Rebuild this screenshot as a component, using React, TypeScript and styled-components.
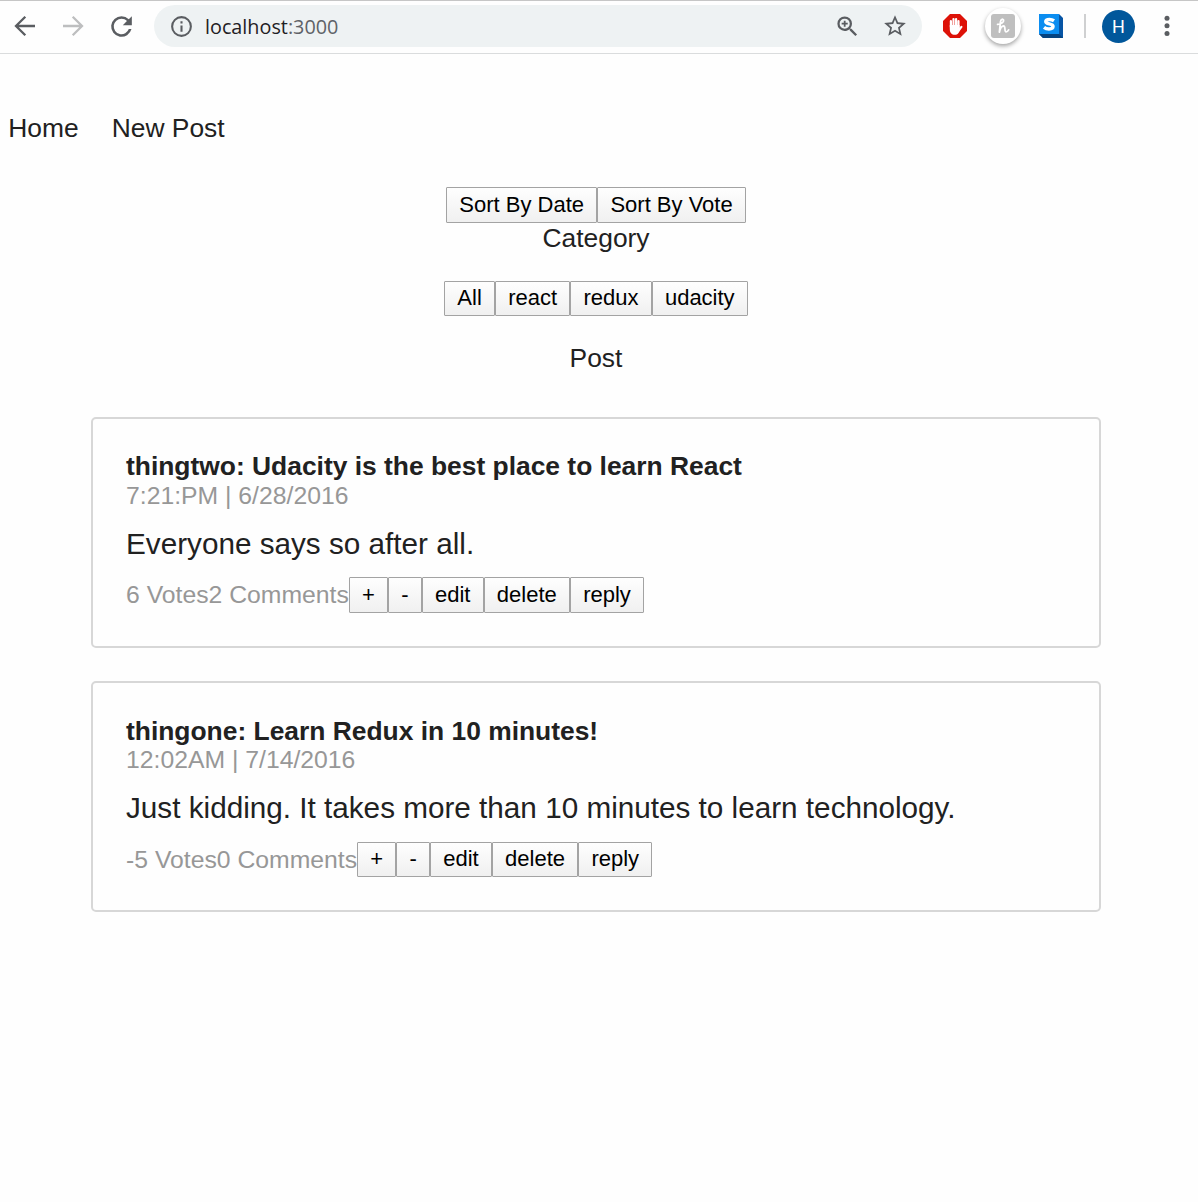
import React from "react";
import styled, { createGlobalStyle } from "styled-components";

const GlobalStyle = createGlobalStyle`
  * { box-sizing: border-box; }
  body {
    margin: 0;
    background: #fefefe;
    color: #212121;
    font-family: "Liberation Sans", Arial, sans-serif;
  }
`;

const Window = styled.div`
  width: 1198px;
  height: 1202px;
  overflow: hidden;
  background: #fefefe;
`;

const Toolbar = styled.header`
  display: flex;
  align-items: center;
  height: 54px;
  padding: 0 16px 2px 10px;
  border-top: 1px solid #c6c6c6;
  border-bottom: 1px solid #dadcdd;
  color: #5a5d61;

  svg { display: block; flex: none; }
`;

const NavIcons = styled.div`
  display: flex;
  align-items: center;
  gap: 18px;
  width: 144px;
  flex: none;
`;

const AddressBar = styled.div`
  display: flex;
  align-items: center;
  width: 768px;
  height: 42px;
  padding: 0 14px 0 15px;
  border-radius: 21px;
  background: #eef2f3;
  flex: none;
`;

const Url = styled.span`
  flex: 1;
  margin-left: 11px;
  padding-top: 2px;
  font: 19.8px/28px "Open Sans", "Noto Sans", sans-serif;
  color: #1f2023;
`;

const Port = styled.span`
  color: #5f6368;
`;

const AddressActions = styled.div`
  display: flex;
  align-items: center;
  gap: 21.5px;
`;

const Extensions = styled.div`
  display: flex;
  align-items: center;
  flex: 1;
  margin-left: 21px;
`;

const HoneyDisc = styled.div`
  display: flex;
  align-items: center;
  justify-content: center;
  width: 36px;
  height: 36px;
  margin: 0 18px;
  border-radius: 50%;
  background: #fff;
  box-shadow: 0 2px 4px rgba(0, 0, 0, 0.36);
`;

const Divider = styled.div`
  width: 2px;
  height: 24px;
  margin: 0 16px 0 21px;
  background: #cfd0d1;
`;

const Avatar = styled.div`
  width: 33px;
  height: 33px;
  margin-right: 28.5px;
  border-radius: 50%;
  background: #01579b;
  color: #fff;
  font: 18px/33px Roboto, sans-serif;
  text-align: center;
`;

const Page = styled.main`
  width: 1192px;
`;

const Nav = styled.nav`
  display: flex;
  gap: 33px;
  padding: 59px 8.25px 0;
  height: 133.45px;
  font-size: 26.4px;
  line-height: 30px;
`;

const ButtonRow = styled.div`
  display: flex;
  justify-content: center;
`;

const Button = styled.button`
  height: 35.4px;
  padding: 0 12.2px 0.6px;
  border: 1px solid #a3a3a3;
  border-radius: 1px;
  background: linear-gradient(#fefefe, #f0f0f0);
  color: #000;
  font: 22px/30px "Liberation Sans", Arial, sans-serif;
`;

const Heading = styled.div<{ $before: number; $after: number }>`
  margin: ${(p) => p.$before}px 0 ${(p) => p.$after}px;
  font-size: 26.4px;
  line-height: 30px;
  text-align: center;
`;

const Card = styled.article`
  width: 1010px;
  height: 230.9px;
  margin: 0 auto 33.4px;
  padding: 32.3px 33px 32px;
  border: 2px solid #d7d7d7;
  border-radius: 5px;
`;

const Title = styled.div`
  font-size: 26.4px;
  font-weight: 700;
  line-height: 30px;
`;

const Stamp = styled.div`
  margin-top: 0.8px;
  color: #979797;
  font-size: 24.75px;
  line-height: 28px;
`;

const Body = styled.div`
  margin: 16.6px 0 16.5px;
  font-size: 29.7px;
  line-height: 34px;
`;

const Actions = styled.div`
  display: flex;
`;

const Counts = styled.span`
  color: #979797;
  font-size: 24.75px;
  line-height: 35px;
`;

const BackIcon = () => (
  <svg width="30" height="30" viewBox="0 0 30 30" fill="none" stroke="currentColor" strokeWidth="2.3">
    <path d="M25 15H6.5M15.3 5.7 6 15l9.3 9.3" />
  </svg>
);

const ForwardIcon = () => (
  <svg width="30" height="30" viewBox="0 0 30 30" fill="none" stroke="#bdbebf" strokeWidth="2.3">
    <path d="M5 15h18.5M14.7 5.7 24 15l-9.3 9.3" />
  </svg>
);

const ReloadIcon = () => (
  <svg width="31" height="31" viewBox="0 0 24 24" fill="currentColor">
    <path d="M17.65 6.35A7.96 7.96 0 0 0 12 4a8 8 0 1 0 7.73 10h-2.08A6 6 0 1 1 12 6c1.66 0 3.14.69 4.22 1.78L13 11h7V4z" />
  </svg>
);

const InfoIcon = () => (
  <svg width="25" height="25" viewBox="0 0 24 24" fill="currentColor">
    <path d="M11 7h2v2h-2zm0 4h2v6h-2zm1-9a10 10 0 1 0 0 20 10 10 0 0 0 0-20zm0 18a8 8 0 1 1 0-16 8 8 0 0 1 0 16z" />
  </svg>
);

const ZoomIcon = () => (
  <svg width="27" height="27" viewBox="0 0 24 24" fill="currentColor">
    <path d="M15.5 14h-.79l-.28-.27A6.47 6.47 0 0 0 16 9.5 6.5 6.5 0 1 0 9.5 16c1.61 0 3.09-.59 4.23-1.57l.27.28v.79l5 4.99L20.49 19zm-6 0a4.5 4.5 0 1 1 0-9 4.5 4.5 0 0 1 0 9zM10.3 6.8H8.7v1.9H6.8v1.6h1.9v1.9h1.6v-1.9h1.9V8.7h-1.9z" />
  </svg>
);

const StarIcon = () => (
  <svg width="26" height="26" viewBox="0 0 24 24" fill="currentColor">
    <path d="m22 9.24-7.19-.62L12 2 9.19 8.63 2 9.24l5.46 4.73L5.82 21 12 17.27 18.18 21l-1.63-7.03zM12 15.4l-3.76 2.27 1-4.28-3.32-2.88 4.38-.38L12 6.1l1.71 4.04 4.38.38-3.32 2.88 1 4.28z" />
  </svg>
);

const BlockerIcon = () => (
  <svg width="24" height="24" viewBox="0 0 24 24">
    <path fill="#dd1208" d="M7 0h10l7 7v10l-7 7H7l-7-7V7z" />
    <g fill="none" stroke="#fff" strokeLinecap="round">
      <path strokeWidth="2.2" d="M7.9 13V7M10.5 12V5M13.1 12V5M15.5 13V7M15.6 16.6l2.8-3.8" />
    </g>
    <path fill="#fff" d="M6.8 11h9.8v4c0 3.8-1.8 5.8-4.7 5.8-3.3 0-5.1-2.1-5.1-5.6z" />
  </svg>
);

const HoneyIcon = () => (
  <svg width="24" height="24" viewBox="0 0 24 24">
    <rect width="24" height="24" rx="3" fill="#bfbfbf" />
    <path
      fill="none"
      stroke="#fff"
      strokeWidth="1.8"
      strokeLinecap="round"
      strokeLinejoin="round"
      d="M6.6 10.4C9.8 10.2 13 8.3 12.6 6.3c-.4-1.7-2.7-1.3-3.1 1.3L8.4 18.2c.8-3.9 2.4-6.2 4.2-6.2 2.3 0 .4 5.9 2.5 5.9 1.1 0 1.9-.8 2.5-2"
    />
  </svg>
);

const StylishIcon = () => (
  <svg width="24" height="24" viewBox="0 0 24 24">
    <path fill="#0755a5" d="M20 0l4 4v20H4l-4-4z" />
    <path fill="#06437f" d="M0 20h20l4 4H4z" />
    <path fill="#0b8df0" d="M0 0h20v20H0z" />
    <path
      fill="none"
      stroke="#fff"
      strokeWidth="3.5"
      d="M15 6.7C13.8 5.9 12.2 5.4 10.5 5.4 8.3 5.4 6.8 6.1 6.8 7.6c0 3.2 7.2 1.4 7.2 4.7 0 1.8-1.7 2.6-4 2.6-1.8 0-3.7-.6-5-1.6"
    />
  </svg>
);

const MenuIcon = () => (
  <svg width="6" height="22" viewBox="0 0 6 22" fill="currentColor">
    <circle cx="3" cy="3.2" r="2.5" />
    <circle cx="3" cy="10.8" r="2.5" />
    <circle cx="3" cy="18.4" r="2.5" />
  </svg>
);

const categories = ["All", "react", "redux", "udacity"];
const postActions = ["+", "-", "edit", "delete", "reply"];

const posts = [
  {
    title: "thingtwo: Udacity is the best place to learn React",
    stamp: "7:21:PM | 6/28/2016",
    body: "Everyone says so after all.",
    votes: 6,
    comments: 2,
  },
  {
    title: "thingone: Learn Redux in 10 minutes!",
    stamp: "12:02AM | 7/14/2016",
    body: "Just kidding. It takes more than 10 minutes to learn technology.",
    votes: -5,
    comments: 0,
  },
];

export default function App() {
  return (
    <Window>
      <GlobalStyle />
      <Toolbar>
        <NavIcons>
          <BackIcon />
          <ForwardIcon />
          <ReloadIcon />
        </NavIcons>
        <AddressBar>
          <InfoIcon />
          <Url>
            localhost<Port>:3000</Port>
          </Url>
          <AddressActions>
            <ZoomIcon />
            <StarIcon />
          </AddressActions>
        </AddressBar>
        <Extensions>
          <BlockerIcon />
          <HoneyDisc>
            <HoneyIcon />
          </HoneyDisc>
          <StylishIcon />
          <Divider />
          <Avatar>H</Avatar>
          <MenuIcon />
        </Extensions>
      </Toolbar>
      <Page>
        <Nav>
          <span>Home</span>
          <span>New Post</span>
        </Nav>
        <ButtonRow>
          <Button>Sort By Date</Button>
          <Button>Sort By Vote</Button>
        </ButtonRow>
        <Heading $before={0} $after={27.8}>Category</Heading>
        <ButtonRow>
          {categories.map((name) => (
            <Button key={name}>{name}</Button>
          ))}
        </ButtonRow>
        <Heading $before={26.8} $after={44.25}>Post</Heading>
        {posts.map((post) => (
          <Card key={post.title}>
            <Title>{post.title}</Title>
            <Stamp>{post.stamp}</Stamp>
            <Body>{post.body}</Body>
            <Actions>
              <Counts>{post.votes} Votes</Counts>
              <Counts>{post.comments} Comments</Counts>
              {postActions.map((label) => (
                <Button key={label}>{label}</Button>
              ))}
            </Actions>
          </Card>
        ))}
      </Page>
    </Window>
  );
}
